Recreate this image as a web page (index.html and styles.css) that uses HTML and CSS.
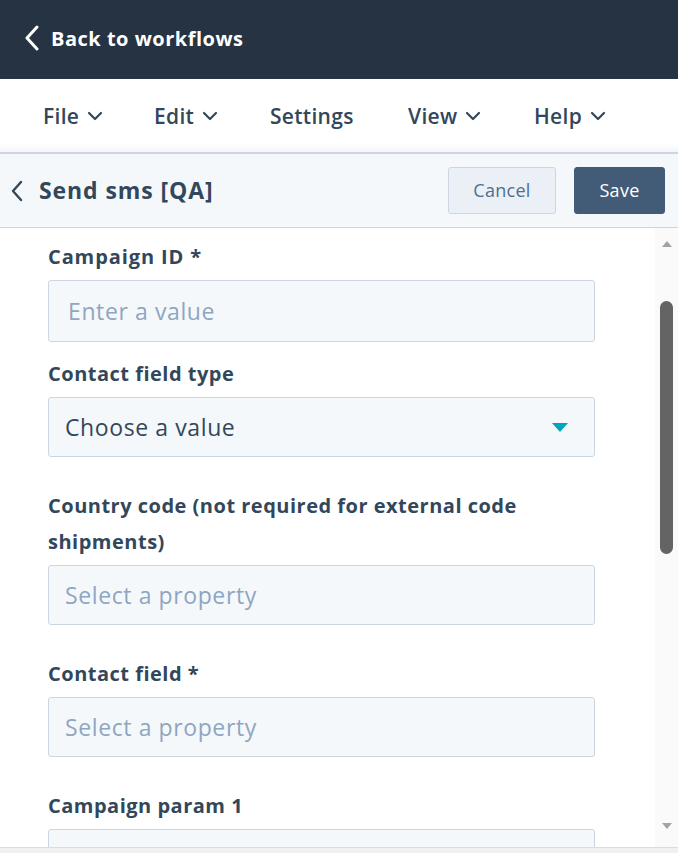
FILE: index.html
```html
<!DOCTYPE html>
<html>
<head>
<meta charset="utf-8">
<link rel="stylesheet" href="styles.css">
</head>
<body>
<div class="app">
  <header class="topbar">
    <svg class="back-chev" width="16" height="26" viewBox="0 0 16 26"><path d="M13 2 L3 13 L13 24" fill="none" stroke="#fff" stroke-width="3" stroke-linecap="round" stroke-linejoin="round"/></svg>
    <span class="back-text">Back to workflows</span>
  </header>
  <nav class="menubar">
    <span class="menu-item">File <svg class="caret" width="16" height="10" viewBox="0 0 16 10"><path d="M2 2 L8 8 L14 2" fill="none" stroke="#33475b" stroke-width="2.2" stroke-linecap="round" stroke-linejoin="round"/></svg></span>
    <span class="menu-item">Edit <svg class="caret" width="16" height="10" viewBox="0 0 16 10"><path d="M2 2 L8 8 L14 2" fill="none" stroke="#33475b" stroke-width="2.2" stroke-linecap="round" stroke-linejoin="round"/></svg></span>
    <span class="menu-item">Settings</span>
    <span class="menu-item">View <svg class="caret" width="16" height="10" viewBox="0 0 16 10"><path d="M2 2 L8 8 L14 2" fill="none" stroke="#33475b" stroke-width="2.2" stroke-linecap="round" stroke-linejoin="round"/></svg></span>
    <span class="menu-item">Help <svg class="caret" width="16" height="10" viewBox="0 0 16 10"><path d="M2 2 L8 8 L14 2" fill="none" stroke="#33475b" stroke-width="2.2" stroke-linecap="round" stroke-linejoin="round"/></svg></span>
  </nav>
  <div class="panel-head">
    <svg class="panel-chev" width="14" height="24" viewBox="0 0 14 24"><path d="M11 3 L3 12 L11 21" fill="none" stroke="#33475b" stroke-width="2.4" stroke-linecap="round" stroke-linejoin="round"/></svg>
    <span class="panel-title">Send sms [QA]</span>
    <span class="spacer"></span>
    <button class="btn btn-cancel">Cancel</button>
    <button class="btn btn-save">Save</button>
  </div>
  <div class="body">
    <div class="content">
      <div class="field field-first">
        <label class="label label-wide">Campaign ID *</label>
        <div class="input input-tall placeholder pad-wide">Enter a value</div>
      </div>
      <div class="field">
        <label class="label">Contact field type</label>
        <div class="input select">
          <span>Choose a value</span>
          <svg width="16" height="9" viewBox="0 0 16 9"><path d="M0 0 L16 0 L8 9 Z" fill="#00a4bd"/></svg>
        </div>
      </div>
      <div class="field">
        <label class="label">Country code (not required for external code shipments)</label>
        <div class="input placeholder">Select a property</div>
      </div>
      <div class="field">
        <label class="label">Contact field *</label>
        <div class="input placeholder">Select a property</div>
      </div>
      <div class="field">
        <label class="label">Campaign param 1</label>
        <div class="input"></div>
      </div>
    </div>
    <div class="scrollbar">
      <svg class="sb-arrow" width="10" height="6" viewBox="0 0 10 6"><path d="M0 6 L5 0 L10 6 Z" fill="#a3a3a3"/></svg>
      <div class="sb-track"><div class="sb-thumb"></div></div>
      <svg class="sb-arrow" width="10" height="6" viewBox="0 0 10 6"><path d="M0 0 L10 0 L5 6 Z" fill="#a3a3a3"/></svg>
    </div>
  </div>
  <div class="bottom-strip"></div>
</div>
</body>
</html>
```
FILE: styles.css
```css
* { box-sizing: border-box; }
html, body { margin: 0; padding: 0; }
body {
  font-family: "Open Sans", "Lato", sans-serif;
  color: #33475b;
  background: #fff;
  width: 678px;
  height: 853px;
  overflow: hidden;
}
.app {
  display: flex;
  flex-direction: column;
  height: 853px;
}
.topbar {
  height: 79px;
  background: #253342;
  display: flex;
  align-items: center;
  padding-left: 24px;
  padding-bottom: 3px;
  gap: 11px;
  flex-shrink: 0;
}
.back-text {
  color: #fff;
  font-weight: 700;
  font-size: 20px;
  letter-spacing: 0.5px;
}
.menubar {
  height: 73px;
  display: flex;
  align-items: center;
  padding-left: 43px;
  gap: 0;
  background: #fff;
  box-shadow: inset 0 -12px 10px -10px rgba(0,0,0,0.06);
  flex-shrink: 0;
}
.menu-item {
  font-size: 21px;
  font-weight: 600;
  letter-spacing: 0.3px;
  display: flex;
  align-items: center;
  gap: 8px;
}
.menu-item:nth-child(1) { width: 111px; }
.menu-item:nth-child(2) { width: 116px; }
.menu-item:nth-child(3) { width: 138px; }
.menu-item:nth-child(4) { width: 126px; }
.caret { margin-top: 1px; }
.panel-head {
  height: 76px;
  background: #f5f8fa;
  border-top: 2px solid #cbd6e2;
  border-bottom: 1px solid #cbd6e2;
  display: flex;
  align-items: center;
  padding-left: 10px;
  padding-right: 13px;
  padding-bottom: 1px;
  flex-shrink: 0;
}
.panel-chev { margin-right: 15px; margin-top: 1px; }
.panel-title {
  font-size: 23px;
  font-weight: 700;
  letter-spacing: 0.9px;
}
.spacer { flex: 1; }
.btn {
  font-family: inherit;
  font-size: 18px;
  height: 47px;
  border-radius: 3px;
  padding: 0;
  letter-spacing: 0.3px;
}
.btn-cancel {
  width: 108px;
  background: #eaf0f6;
  border: 1px solid #cbd6e2;
  color: #506e91;
  margin-right: 18px;
}
.btn-save {
  width: 91px;
  background: #425b76;
  border: 1px solid #425b76;
  color: #fff;
}
.body {
  flex: 1;
  display: flex;
  min-height: 0;
  overflow: hidden;
}
.content {
  flex: 1;
  padding: 11px 0 0 48px;
  overflow: hidden;
}
.field { width: 547px; margin-bottom: 31px; }
.field-first { margin-bottom: 14px; }
.label {
  display: block;
  font-size: 20px;
  font-weight: 700;
  line-height: 36px;
  letter-spacing: 0.5px;
  margin-bottom: 5px;
}
.label-wide { letter-spacing: 0.9px; }
.input {
  height: 60px;
  background: #f5f8fa;
  border: 1px solid #cbd6e2;
  border-radius: 3px;
  display: flex;
  align-items: center;
  padding: 0 16px;
  font-size: 23px;
  letter-spacing: 0.6px;
  color: #33475b;
}
.input-tall { height: 62px; }
.input.placeholder { color: #8ea6c1; }
.input.pad-wide { padding-left: 19px; }
.input.select { justify-content: space-between; padding-right: 26px; }
.scrollbar {
  width: 23px;
  background: #fafafa;
  display: flex;
  flex-direction: column;
  align-items: center;
  padding: 13px 0 18px;
  flex-shrink: 0;
}
.sb-arrow { flex-shrink: 0; margin-left: 1px; }
.sb-track {
  flex: 1;
  width: 100%;
  display: flex;
  justify-content: center;
}
.sb-thumb {
  width: 13px;
  height: 253px;
  margin-top: 54px;
  background: #646464;
  border-radius: 7px;
}
.bottom-strip {
  height: 6px;
  background: #f1f1f1;
  border-top: 1px solid #dcdcdc;
  flex-shrink: 0;
}
```
